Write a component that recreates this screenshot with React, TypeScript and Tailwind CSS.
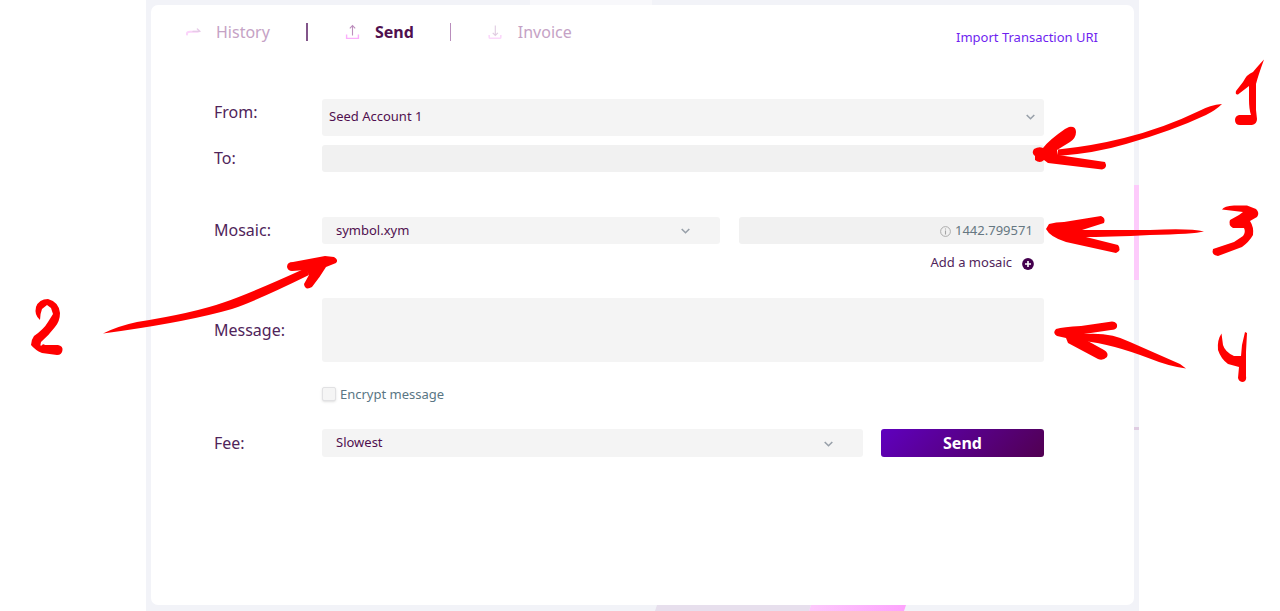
import type { ReactNode } from "react";

function Chevron({ className }: { className: string }) {
  return (
    <svg
      className={`pointer-events-none absolute h-[6px] w-[9px] ${className}`}
      viewBox="0 0 9 6"
      fill="none"
      stroke="#98a0a9"
      strokeWidth="1.6"
      aria-hidden="true"
    >
      <path d="M0.7 1 4.5 4.7 8.3 1" />
    </svg>
  );
}

function HistoryIcon() {
  return (
    <svg className="h-4 w-4" viewBox="0 0 16 16" fill="none" aria-hidden="true">
      <path d="M2 10.600C1.600 8.400 2.800 7.800 5 7.800H13" stroke="#fbd3fa" strokeWidth="2" strokeLinecap="round" />
      <path d="M8 7.400H15M12.400 5 15 7.400" stroke="#e6cbe7" strokeWidth="1.400" strokeLinecap="round" />
    </svg>
  );
}

function UploadIcon() {
  return (
    <svg className="h-4 w-4" viewBox="0 0 16 16" fill="none" aria-hidden="true">
      <path d="M2.6 10.5V14.4H14.4V10.5" stroke="#fbaefb" strokeWidth="1.4" />
      <path d="M8.5 11.5V1.8M5.8 4.3 8.5 1.6 11.2 4.3" stroke="#bd8fbd" strokeWidth="1.1" />
    </svg>
  );
}

function DownloadIcon() {
  return (
    <svg className="h-4 w-4" viewBox="0 0 16 16" fill="none" aria-hidden="true">
      <path d="M2.2 11V13.2Q2.2 14.3 3.3 14.3H12.7Q13.8 14.3 13.8 13.2V11" stroke="#fbd8fb" strokeWidth="1.6" />
      <path d="M8.3 1.5V11.4M5.7 8.8 8.3 11.5 10.9 8.8" stroke="#e0cce1" strokeWidth="1.1" />
    </svg>
  );
}

function FieldLabel({ htmlFor, children }: { htmlFor: string; children: ReactNode }) {
  return (
    <label htmlFor={htmlFor} className="w-[108px] shrink-0 text-base leading-[27px]">
      {children}
    </label>
  );
}

function Annotations() {
  return (
    <svg
      className="pointer-events-none absolute top-0 left-0 h-[611px] w-[1280px]"
      viewBox="0 0 1280 611"
      fill="#ff0000"
      strokeLinecap="round"
      strokeLinejoin="round"
      aria-hidden="true"
    >
      {/* 1 */}
      <path d="M1222 104Q1210 105 1199 111Q1164 128 1124 138Q1092 146 1058 149.500L1058 156Q1096 153 1126 144Q1172 131 1206 115Q1216 110 1222 104Z" />
      <path d="M1034 149Q1039 146 1043 148Q1049 140 1065 129L1069 127Q1076 126 1076 132Q1076 138 1070 142L1057 150L1058 155L1105 162Q1108 168 1102 169.500L1048 163L1044 160Q1040 164 1035 160L1035 156Q1031 153 1034 149Z" />
      <path d="M1264 59.500Q1257 67 1253 72Q1247 74 1243 82L1236 91Q1235 95 1238 94.500L1249 86V100Q1249 109 1251 115H1239Q1235 116 1235 120Q1235 125 1240 125H1252Q1257 124 1257 119L1256 110V84Q1258 76 1264 59.500Z" />
      {/* 2 */}
      <path d="M103 333.500Q118 326 137 322Q194 313 225 302Q251 293 306 268L309 275Q256 301 232 309Q190 321 121 331Q112 332 103 333.500Z" />
      <path d="M287 267Q287 262 293 262L325 256L334 257Q339 260 336 263L326 267Q320 277 312 287Q305 291 304 284L309 275L306 270L292 271Q288 271 287 267Z" />
      <path d="M40 320Q34 315 36 307Q39 299 48 299Q59 302 60 313Q60 321 55 327Q49 335 41 342Q40 345 41 346Q43 343 45 345H58Q63 346 62.500 350Q62 355 57 355L42 353Q35 350 31 345Q31 340 34 336Q44 329 48 322L53 314L51 308L47 305L42 309Q40 314 40 320Z" />
      {/* 3 */}
      <path d="M1204 231.500Q1190 228 1150 230H1080V237Q1110 237 1150 235Q1194 234 1204 231.500Z" />
      <path d="M1046 229L1049 224Q1056 222 1064 222L1101 216Q1106 218 1104 223L1082 230V236L1118 245Q1122 250 1116 253L1066 242Q1050 237 1046 229Z" />
      <path d="M1222 209.500Q1224 206 1234 205.500H1247L1256 209Q1260 213 1257 217L1250 221Q1254 227 1253 235Q1249 242 1242 247L1218 256Q1211 255 1213 249L1234 242L1243 236Q1246 232 1244 228L1233 228Q1228 225 1230 220L1239 215L1243 212Z" />
      {/* 4 */}
      <path d="M1186 368.500Q1168 366 1151 359Q1112 344 1084 341V334Q1111 332 1130 342L1180 364Z" />
      <path d="M1056 329Q1063 327 1081 326L1112 321.500Q1118 322 1117 327Q1116 330 1111 330L1084 334L1086 340L1104 350Q1109 353 1107 357Q1103 361 1098 359L1068 343L1066 338L1057 336Q1052 333 1056 329Z" />
      <path d="M1221.500 333.500Q1217 340 1218 350Q1221 359 1228 364L1239 367L1238 378Q1239 382 1243 382Q1247 381 1246 376V352L1247 333L1245 332L1242 345L1241 356H1234Q1225 352 1223 345Z" />
    </svg>
  );
}

export default function App() {
  const selectClass =
    "w-full appearance-none rounded-[3px] bg-[#f4f4f4] text-[13px] text-[#50104f] outline-none";

  return (
    <div className="relative min-h-screen bg-white pr-[141px] pl-[146px] font-['Noto_Sans',sans-serif] text-[#50245a]">
      <div className="relative flex min-h-screen flex-col bg-[#f2f3f8] p-[5px] pb-[6px]">
        <div className="absolute top-0 left-[384px] h-[5px] w-[122px] bg-[#f8f8fb]" />
        <div className="absolute top-[185px] right-0 h-[95px] w-[5px] bg-[#fdcbfb]" />
        <div className="absolute top-[427px] right-0 h-[3px] w-[5px] bg-[#dfcde2]" />
        <svg className="absolute bottom-0 left-[509px] h-[6px] w-[252px]" viewBox="0 0 252 6" aria-hidden="true">
          <defs>
            <linearGradient id="pinkBand">
              <stop offset="0" stopColor="#fcc8fa" />
              <stop offset="1" stopColor="#fda3fc" />
            </linearGradient>
          </defs>
          <path d="M2 0H156L154 6H0Z" fill="#e7dfed" />
          <path d="M156 0H251L249 6H154Z" fill="url(#pinkBand)" />
        </svg>

        <main className="relative flex-1 rounded-[7px] bg-white">
          <header className="flex items-start justify-between pt-[13px] pr-[36px] pl-[34px]">
            <nav className="flex h-7 items-center text-base">
              <a href="#history" className="flex items-center gap-[15px] text-[#c5a2c5]">
                <HistoryIcon />
                History
              </a>
              <span className="mr-[36px] ml-[36px] h-[18px] w-[2px] bg-[#82558a]" />
              <a href="#send" className="flex items-center gap-[15px] font-bold text-[#50104f]" aria-current="page">
                <UploadIcon />
                Send
              </a>
              <span className="mr-[36px] ml-[36px] h-[18px] w-px bg-[#b98dbc]" />
              <a href="#invoice" className="flex items-center gap-[15px] text-[#c5a2c5]">
                <DownloadIcon />
                Invoice
              </a>
            </nav>
            <a href="#import" className="mt-[9px] text-[13px] leading-5 text-[#6f1ff0]">
              Import Transaction URI
            </a>
          </header>

          <form className="pt-[52px] pr-[90px] pl-[63px]" onSubmit={(e) => e.preventDefault()}>
            <div className="flex items-start">
              <FieldLabel htmlFor="from">From:</FieldLabel>
              <div className="relative flex-1">
                <select id="from" className={`${selectClass} block h-[37px] pb-[2px] pl-[7px]`}>
                  <option>Seed Account 1</option>
                </select>
                <Chevron className="top-[15px] right-[9px]" />
              </div>
            </div>

            <div className="mt-[9px] flex items-center">
              <FieldLabel htmlFor="to">To:</FieldLabel>
              <input id="to" type="text" className="h-[27px] min-w-0 flex-1 rounded-[3px] bg-[#f1f1f1] px-2 text-[13px] outline-none" />
            </div>

            <div className="mt-[45px] flex items-center">
              <FieldLabel htmlFor="mosaic">Mosaic:</FieldLabel>
              <div className="relative flex-[397]">
                <select id="mosaic" className={`${selectClass} block h-[27px] pl-[14px]`}>
                  <option>symbol.xym</option>
                </select>
                <Chevron className="top-[11px] right-[30px]" />
              </div>
              <div className="ml-[19px] flex h-[27px] flex-[292] items-center justify-end gap-1 rounded-[3px] bg-[#f1f1f1] pr-[13px]">
                <svg className="mt-px h-[11px] w-[11px]" viewBox="0 0 11 11" fill="none" stroke="#a5a5a5" aria-hidden="true">
                  <circle cx="5.500" cy="5.500" r="4.900" strokeWidth="0.9" />
                  <path d="M5.500 4.500V8.500M5.500 2.500V3.500" strokeWidth="1.1" />
                </svg>
                <input
                  type="text"
                  aria-label="Amount"
                  defaultValue="1442.799571"
                  className="w-[76px] bg-transparent text-[13px] text-[#657781] outline-none"
                />
              </div>
            </div>

            <div className="mt-2 flex justify-end pr-[10px]">
              <button type="button" className="flex items-center gap-[10px] text-[13px] leading-5 text-[#50245a]">
                Add a mosaic
                <svg className="mt-[3px] h-3 w-3" viewBox="0 0 12 12" aria-hidden="true">
                  <circle cx="6" cy="6" r="5.900" fill="#44004e" />
                  <path d="M6 3V9M3 6H9" stroke="#fff" strokeWidth="1.6" />
                </svg>
              </button>
            </div>

            <div className="mt-[26px] flex items-center">
              <FieldLabel htmlFor="message">Message:</FieldLabel>
              <textarea
                id="message"
                className="block h-[64px] min-w-0 flex-1 resize-none rounded-[3px] bg-[#f4f4f4] p-2 text-[13px] outline-none"
              />
            </div>

            <label className="mt-[22px] ml-[108px] flex items-center gap-[4px] text-[13px] leading-5 text-[#5a7684]">
              <input
                type="checkbox"
                className="h-[14px] w-[14px] appearance-none rounded-[2px] border border-[#e1e1e3] bg-[#f5f5f5] shadow-sm"
              />
              Encrypt message
            </label>

            <div className="mt-[25px] flex items-center">
              <FieldLabel htmlFor="fee">Fee:</FieldLabel>
              <div className="relative flex-[541]">
                <select id="fee" className={`${selectClass} block h-7 pb-px pl-[14px]`}>
                  <option>Slowest</option>
                </select>
                <Chevron className="top-[12px] right-[30px]" />
              </div>
              <button
                type="submit"
                className="ml-[18px] h-7 flex-[163] rounded-[3px] bg-linear-[135deg,#5f00bf,#510051] text-base font-bold text-white"
              >
                Send
              </button>
            </div>
          </form>
        </main>
      </div>
      <Annotations />
    </div>
  );
}
